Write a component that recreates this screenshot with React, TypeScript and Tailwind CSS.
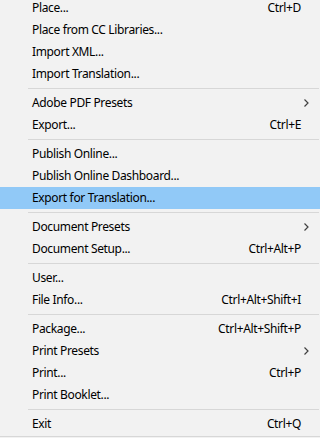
import React from "react";

type Item =
  | { sep: true }
  | { label: string; shortcut?: string; sub?: boolean; active?: boolean };

const items: Item[] = [
  { label: "Place...", shortcut: "Ctrl+D" },
  { label: "Place from CC Libraries..." },
  { label: "Import XML..." },
  { label: "Import Translation..." },
  { sep: true },
  { label: "Adobe PDF Presets", sub: true },
  { label: "Export...", shortcut: "Ctrl+E" },
  { sep: true },
  { label: "Publish Online..." },
  { label: "Publish Online Dashboard..." },
  { label: "Export for Translation...", active: true },
  { sep: true },
  { label: "Document Presets", sub: true },
  { label: "Document Setup...", shortcut: "Ctrl+Alt+P" },
  { sep: true },
  { label: "User..." },
  { label: "File Info...", shortcut: "Ctrl+Alt+Shift+I" },
  { sep: true },
  { label: "Package...", shortcut: "Ctrl+Alt+Shift+P" },
  { label: "Print Presets", sub: true },
  { label: "Print...", shortcut: "Ctrl+P" },
  { label: "Print Booklet..." },
  { sep: true },
  { label: "Exit", shortcut: "Ctrl+Q" },
];

function Chevron() {
  return (
    <svg width="5" height="8" viewBox="0 0 5 8" className="block">
      <path d="M0.5 0.5 L4 4 L0.5 7.5" fill="none" stroke="#404040" strokeWidth="1.2" />
    </svg>
  );
}

export default function App() {
  return (
    <div
      className="w-[320px] h-[438px] overflow-hidden bg-[#f2f2f2] text-[12px] tracking-[-0.35px] text-black"
      style={{ fontFamily: '"Noto Sans", "Open Sans", sans-serif' }}
    >
      <div className="-mt-[3px] flex flex-col">
        {items.map((it, i) =>
          "sep" in it ? (
            <div key={i} className="h-[7px] flex items-center pl-[28px] pr-[1px]">
              <div className="h-px w-full bg-[#d7d7d7]" />
            </div>
          ) : (
            <div
              key={i}
              className={
                "h-[22px] flex items-center pl-[32px] pr-[11px] " +
                (it.active ? "bg-[#91c9f7]" : "")
              }
            >
              <span className="flex-1 whitespace-nowrap">{it.label}</span>
              {it.shortcut && <span className="whitespace-nowrap pr-[8px]">{it.shortcut}</span>}
              {it.sub && <Chevron />}
            </div>
          )
        )}
        <div className="h-px w-full bg-[#d7d7d7] mt-[1px]" />
      </div>
    </div>
  );
}
